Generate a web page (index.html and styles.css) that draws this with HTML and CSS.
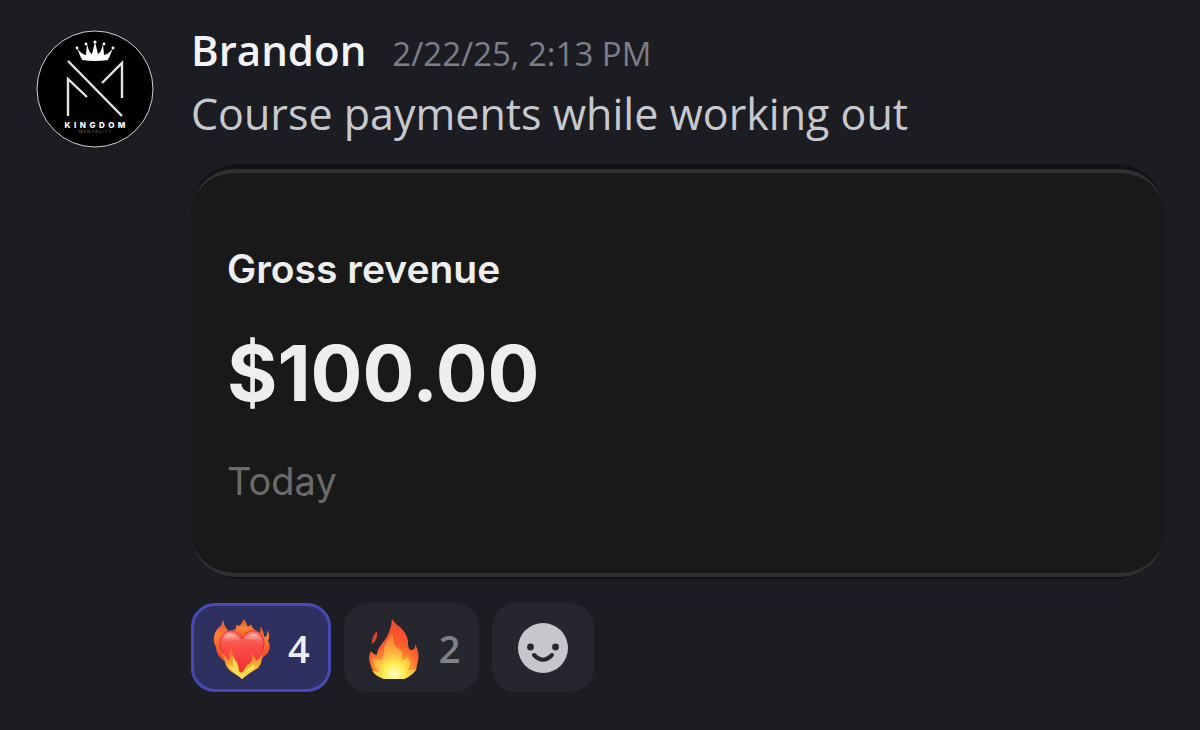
FILE: index.html
```
<!DOCTYPE html>
<html lang="en">
<head>
  <meta charset="UTF-8">
  <meta name="viewport" content="width=device-width, initial-scale=1.0">
  <title>Brandon - Course payments</title>
  <link rel="stylesheet" href="styles.css">
</head>
<body>

  <article class="message">
    <!-- Avatar -->
    <svg class="avatar" viewBox="0 0 118 118" role="img" aria-label="Kingdom Mentality">
      <circle cx="59" cy="59" r="58" fill="#000" stroke="#d0d0d0" stroke-width="1"/>
      <g fill="#fff">
        <path d="M45 28 L41 18 Q45 24 50 25 L51 14 Q53 23 56 24 L59 12 L62 24 Q65 23 67 14 L68 25 Q73 24 77 18 L73 28 Q59 24 45 28 Z"/>
        <path d="M45 26 Q59 22 73 26 L72 30 Q59 32 46 30 Z"/>
        <circle cx="41" cy="18" r="1.4"/>
        <circle cx="50" cy="14" r="1.4"/>
        <circle cx="59" cy="12" r="1.6"/>
        <circle cx="68" cy="14" r="1.4"/>
        <circle cx="77" cy="18" r="1.4"/>
      </g>
      <path d="M32 86 V49 L51 67 M32 31 L86 86 M66 53 L86 33 V68" fill="none" stroke="#e4e4e4" stroke-width="2.4"/>
      <text class="logo-name" x="59" y="98" text-anchor="middle">K&nbsp;&nbsp;I&nbsp;&nbsp;N&nbsp;&nbsp;G&nbsp;&nbsp;D&nbsp;&nbsp;O&nbsp;&nbsp;M</text>
      <text class="logo-sub" x="59" y="103" text-anchor="middle">M E N T A L I T Y</text>
    </svg>

    <div class="content">
      <header class="message-header">
        <h2 class="username">Brandon</h2>
        <time class="timestamp" datetime="2025-02-22T14:13">2/22/25, 2:13 PM</time>
      </header>
      <p class="text">Course payments while working out</p>

      <!-- Revenue card -->
      <div class="attachment">
        <section class="card">
          <h3 class="card-title">Gross revenue</h3>
          <p class="amount">$100.00</p>
          <p class="period">Today</p>
        </section>
      </div>

      <!-- Reactions -->
      <div class="reactions">
        <button class="reaction active" type="button" aria-label="Heart on fire, 4">
          <svg class="emoji" viewBox="0 0 62 62" aria-hidden="true">
            <defs>
              <linearGradient id="heartFlame" x1="0" y1="0" x2="0" y2="1">
                <stop offset="0" stop-color="#f0552e"/>
                <stop offset=".35" stop-color="#f8803c"/>
                <stop offset="1" stop-color="#f0401f"/>
              </linearGradient>
              <linearGradient id="heartRed" x1="0" y1="0" x2="0" y2="1">
                <stop offset="0" stop-color="#ff7a70"/>
                <stop offset=".3" stop-color="#fb4f4a"/>
                <stop offset="1" stop-color="#e8262a"/>
              </linearGradient>
              <linearGradient id="heartShine" x1="0" y1="0" x2="0" y2="1">
                <stop offset="0" stop-color="#ffd8d0" stop-opacity=".75"/>
                <stop offset="1" stop-color="#ffb0a8" stop-opacity="0"/>
              </linearGradient>
              <linearGradient id="heartGold" x1="0" y1="0" x2="0" y2="1">
                <stop offset="0" stop-color="#f4512a"/>
                <stop offset=".5" stop-color="#fca12f"/>
                <stop offset="1" stop-color="#ffe04a"/>
              </linearGradient>
            </defs>
            <!-- flames behind the heart -->
            <path d="M12 44 Q4 38 4 30 Q0 24 3 16 Q5 11 9 9 Q9 6 12 3 Q11 8 15 12 Q18 16 17 21 L12 30 Z" fill="url(#heartFlame)"/>
            <path d="M17 21 Q19 13 22 13 Q25 12 24 8 Q28 10 29 7 Q31 5 31 2 Q35 5 35 9 Q38 10 39 7 Q40 12 45 14 Q48 15 47 22 L30 28 Z" fill="url(#heartFlame)"/>
            <path d="M44 19 Q50 17 48 10 Q52 13 52 20 Q56 19 55 13 Q59 18 56 24 Q60 30 55 37 L48 43 Z" fill="url(#heartFlame)"/>
            <path d="M30 62 C25 51 8 41 8 27 C8 12 24 9 30 22 C36 9 52 12 52 27 C52 41 36 51 30 62 Z" fill="url(#heartRed)" stroke="#d8352a" stroke-width="1"/>
            <path d="M11 25 C11 14 22 14 28 23 Q18 24 11 25 Z" fill="url(#heartShine)"/>
            <path d="M33 22 C38 14 48 15 50 25 Q42 23 33 22 Z" fill="url(#heartShine)"/>
            <!-- flames in front -->
            <path d="M30 62 C25 57 14 54 13 45 Q11 38 8 35 Q13 37 16 43 Q18 43 17 38 Q16 33 20 29 Q19 36 23 42 Q27 47 27 54 Q30 58 33 51 Q34 48 38 46 Q42 42 39 37 Q44 40 44 44 Q48 41 50 36 Q51 45 46 51 Q37 56 30 62 Z" fill="url(#heartGold)"/>
            <path d="M29 60 Q19 55 17 47 Q20 50 22 50 Q20 45 21 40 Q26 48 27 55 Q31 59 36 51 Q39 51 41 47 Q42 50 44 48 Q42 53 36 55 Q32 58 30 62 Z" fill="#ffe052"/>
          </svg>
          <span class="count">4</span>
        </button>
        <button class="reaction" type="button" aria-label="Fire, 2">
          <svg class="emoji" viewBox="0 0 62 62" aria-hidden="true">
            <defs>
              <radialGradient id="fireBody" gradientUnits="userSpaceOnUse" cx="31" cy="57" r="55">
                <stop offset="0" stop-color="#ffe34d"/>
                <stop offset=".3" stop-color="#ff9a30"/>
                <stop offset=".55" stop-color="#fb5c2c"/>
                <stop offset="1" stop-color="#ee4a30"/>
              </radialGradient>
              <radialGradient id="fireCore" gradientUnits="userSpaceOnUse" cx="31" cy="57" r="40">
                <stop offset="0" stop-color="#fffdc8"/>
                <stop offset=".25" stop-color="#ffee53"/>
                <stop offset=".55" stop-color="#ffb03b"/>
                <stop offset="1" stop-color="#ff7a3c"/>
              </radialGradient>
            </defs>
            <path d="M14 14 Q8 20 9 27 Q13 24 14 20 Z" fill="#d9472e"/>
            <path d="M21 62 Q9 57 7 46 Q5 39 8 34 Q11 38 14 38 Q14 33 18 28 Q28 17 29 2 Q32 7 38 11 Q46 19 45 28 Q46 34 49 33 Q53 32 52 27 Q57 36 55 44 Q54 56 41 62 Z" fill="url(#fireBody)"/>
            <path d="M21 62 Q10 58 9 53 Q14 56 16 54 Q9 47 10 40 Q14 44 19 42 Q21 39 21 33 Q22 24 30 17 Q29 29 36 32 Q40 35 39 43 Q43 43 44 39 Q50 45 45 53 Q50 54 54 51 Q51 58 41 62 Z" fill="url(#fireCore)"/>
          </svg>
          <span class="count">2</span>
        </button>
        <button class="reaction add" type="button" aria-label="Add reaction">
          <svg class="smiley" viewBox="0 0 50 50" aria-hidden="true">
            <circle cx="25" cy="25" r="25" fill="#c6c7cc"/>
            <circle cx="12.5" cy="24" r="3.4" fill="#25262e"/>
            <circle cx="37.5" cy="24" r="3.4" fill="#25262e"/>
            <path d="M16 32 Q25 41.5 34 32" fill="none" stroke="#25262e" stroke-width="4" stroke-linecap="round"/>
          </svg>
        </button>
      </div>
    </div>
  </article>

</body>
</html>
```
FILE: styles.css
```
* {
  box-sizing: border-box;
}

body {
  margin: 0;
  background: #1c1d22;
  font-family: "Open Sans", "Noto Sans", sans-serif;
}

h2, h3, p {
  margin: 0;
}

.message {
  display: flex;
  align-items: flex-start;
  gap: 37px;
  padding: 20px 36px;
}

.avatar {
  flex: none;
  width: 118px;
  height: 118px;
  margin-top: 10px;
}

.logo-name {
  font: 800 8px "Inter", sans-serif;
  fill: #fff;
}

.logo-sub {
  font: 400 4px "Inter", sans-serif;
  fill: #777;
}

.content {
  flex: 1;
  min-width: 0;
}

.message-header {
  display: flex;
  align-items: baseline;
  gap: 26px;
  line-height: 60px;
}

.username {
  font-size: 42px;
  font-weight: 600;
  color: #f4f4f8;
}

.timestamp {
  font-size: 33px;
  color: #7d7e88;
}

.text {
  font-size: 43px;
  font-weight: 400;
  line-height: 60px;
  color: #c8c9ce;
}

/* Revenue card */
.attachment {
  margin-top: 20px;
  padding: 5px 0 2px;
  border-radius: 48px;
  background: #111215;
}

.card {
  padding: 72px 36px 68px;
  border-top: 4px solid #303031;
  border-bottom: 4px solid #303031;
  border-radius: 44px;
  background: #191919;
  font-family: "Inter", sans-serif;
  color: #eee;
}

.card-title {
  font-size: 39px;
  font-weight: 600;
  line-height: 48px;
}

.amount {
  margin-top: 32px;
  font-size: 77px;
  font-weight: 700;
  line-height: 96px;
}

.period {
  margin-top: 36px;
  font-size: 38px;
  line-height: 48px;
  color: #6b6b6b;
}

/* Reactions */
.reactions {
  display: flex;
  gap: 13px;
  margin-top: 24px;
}

.reaction {
  display: flex;
  align-items: center;
  gap: 14px;
  height: 89px;
  padding: 0 19px;
  border: 0;
  border-radius: 24px;
  background: #26262f;
  font: 600 38px "Open Sans", sans-serif;
  color: #7f808a;
  cursor: pointer;
}

.reaction.active {
  padding: 0 18px;
  border: 3px solid #454bb5;
  background: #2e3060;
  color: #eeeefa;
}

.reaction.add {
  padding: 0 26px;
}

.emoji {
  width: 62px;
  height: 62px;
}

.smiley {
  width: 50px;
  height: 50px;
}
```
